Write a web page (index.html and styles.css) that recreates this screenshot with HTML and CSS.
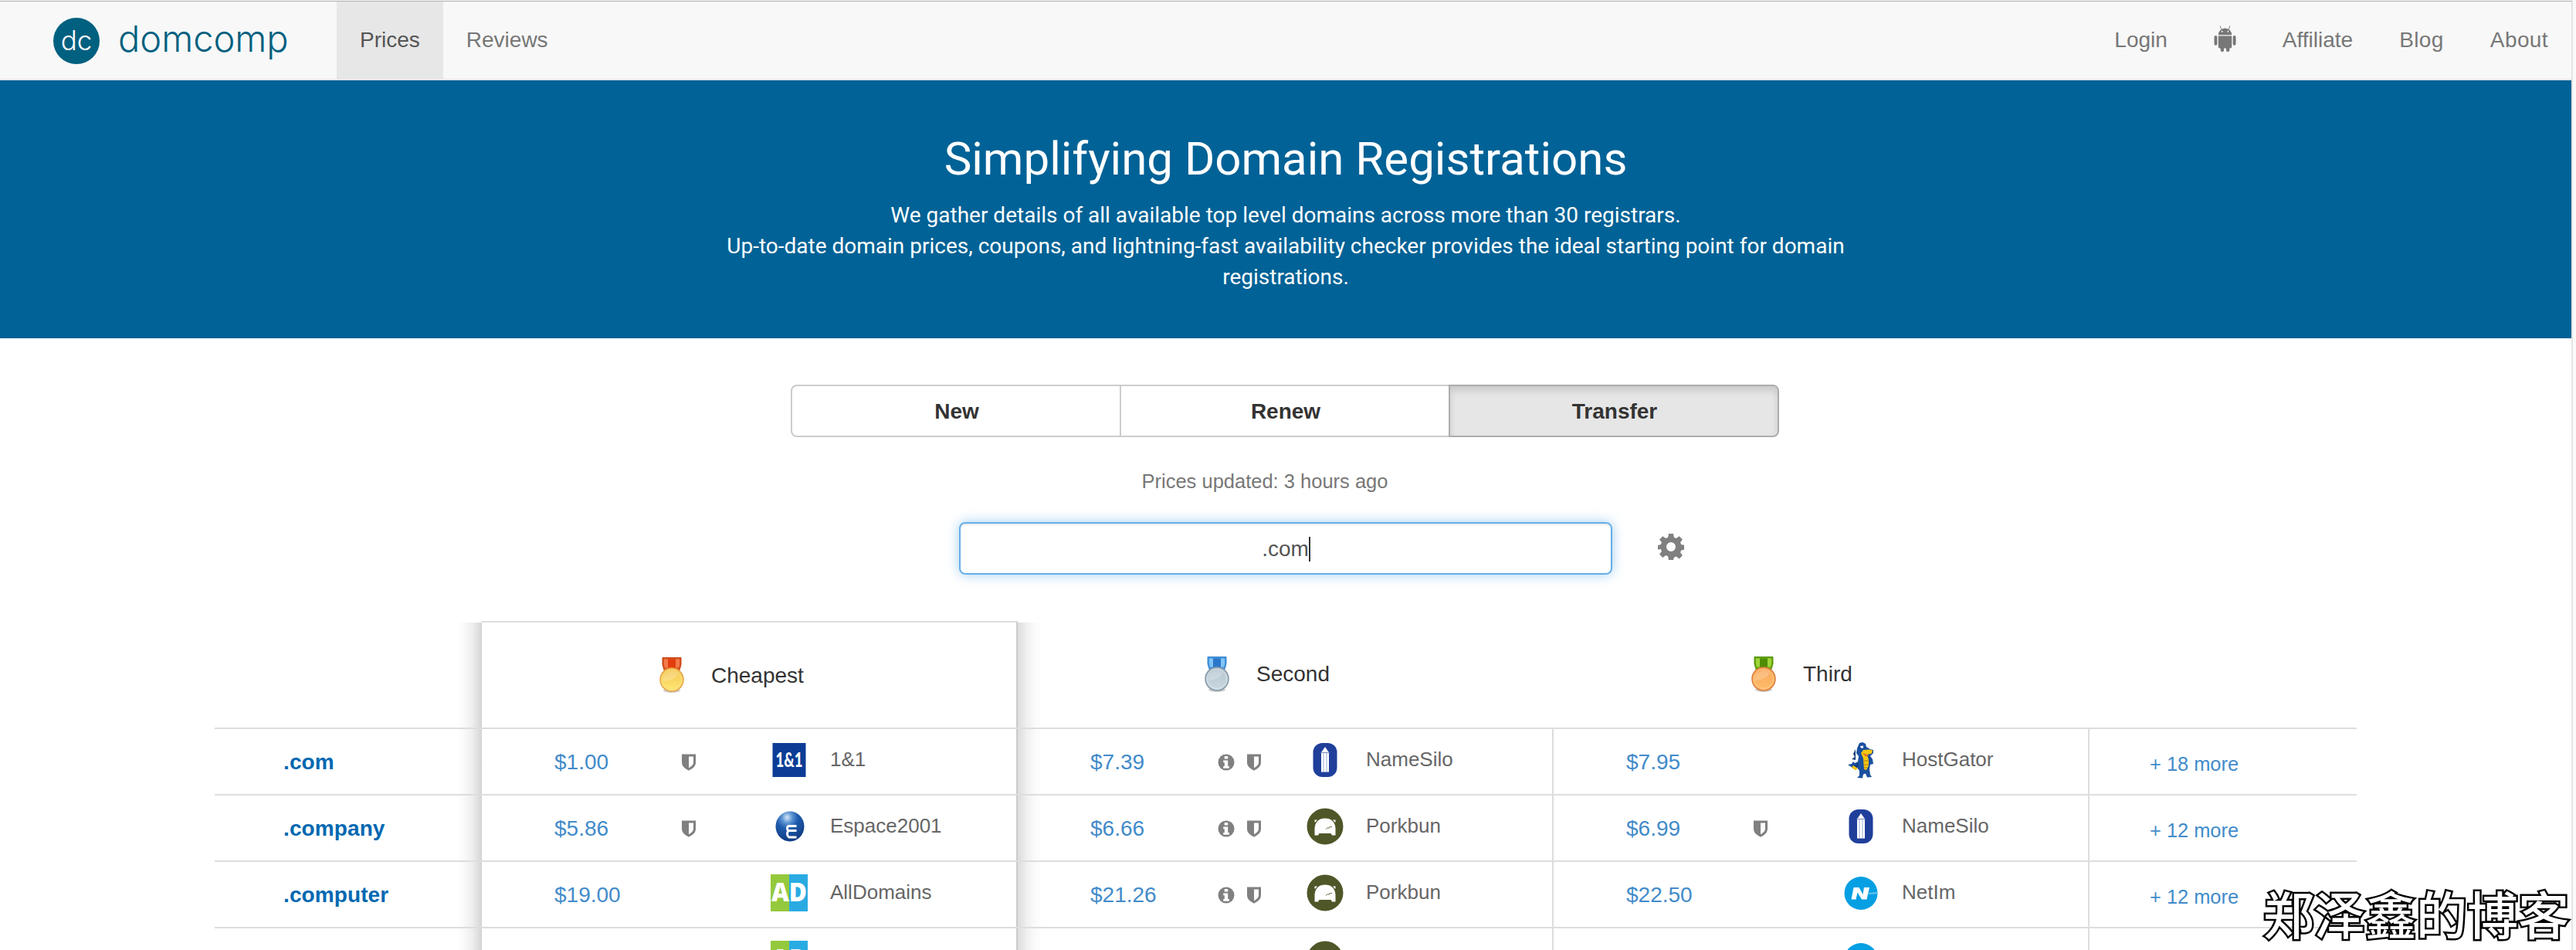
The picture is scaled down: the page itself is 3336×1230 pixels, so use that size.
FILE: index.html
```
<!DOCTYPE html>
<html lang="en">
<head>
<meta charset="utf-8">
<title>domcomp</title>
<link rel="stylesheet" href="styles.css">
</head>
<body>
<svg class="defs" width="0" height="0" aria-hidden="true">
  <defs>
    <linearGradient id="gold" x1="0" y1="0" x2="0" y2="1"><stop offset="0" stop-color="#f3c454"/><stop offset="1" stop-color="#ffe873"/></linearGradient>
    <linearGradient id="silver" x1="0" y1="0" x2="0" y2="1"><stop offset="0" stop-color="#b5c4ce"/><stop offset="1" stop-color="#c9d9df"/></linearGradient>
    <linearGradient id="bronze" x1="0" y1="0" x2="0" y2="1"><stop offset="0" stop-color="#f9a75c"/><stop offset="1" stop-color="#ffbd69"/></linearGradient>
    <radialGradient id="ball" cx=".4" cy=".2" r=".75"><stop offset="0" stop-color="#d5e8fa"/><stop offset=".25" stop-color="#5b93d2"/><stop offset=".5" stop-color="#1f5cae"/><stop offset="1" stop-color="#123f86"/></radialGradient>
  </defs>
  <symbol id="shield" viewBox="0 0 18 22"><path fill="#808080" fill-rule="evenodd" d="M0 0.5h18v10.500c0 5.500-4.500 8.500-9 10.700c-4.500-2.200-9-5.200-9-10.700zM9 3.500v14.700c3.500-2 6-4.200 6-7.300v-7.400z"/></symbol>
  <symbol id="info" viewBox="0 0 22 22"><circle cx="11" cy="11" r="10.500" fill="#808080"/><path fill="#fff" d="M8.700 3h4.500v3.600h-4.500zM7.200 8.500h6v7.500h1.700v2.700h-7.700v-2.700h1.600v-4.700h-1.600z"/></symbol>
  <symbol id="espace" viewBox="0 0 48 48"><ellipse cx="25" cy="24" rx="18.500" ry="19.500" fill="url(#ball)"/><path d="M33.500 23H24q-2.500 0-2.500 3t2.500 3h9.500M24 29q-2.500 1-2.500 4t2.500 4.500h9.500" transform="translate(0 0.500)" fill="none" stroke="#fff" stroke-width="2.800"/></symbol>
  <symbol id="namesilo" viewBox="0 0 48 48"><rect x="8.500" y="2" width="31" height="44" rx="12" fill="#1f3f9b"/><path fill="#fff" d="M24 7l4.800 7h-9.600zM19 15h10v24.500h-10z"/><path fill="none" stroke="#9daad0" stroke-width="1" d="M22 15v24.500M26 15v24.500M18.500 14.300h11"/></symbol>
  <symbol id="porkbun" viewBox="0 0 48 48"><circle cx="24" cy="24" r="23.500" fill="#4f5728"/><path fill="#fff" d="M10.500 15.500h3.500l-2.500 3h-1zM37.500 15.500h-3.500l2.500 3h1zM10.500 35.500V26Q12 13.500 24 13.500T37.500 26V35.500H33L31.500 33H16.500L15 35.500z"/><path fill="none" stroke="#4f5728" stroke-width=".8" d="M25 27.500l3.500-2.500M28.500 27l1.500-2.500h3"/></symbol>
  <symbol id="hostgator" viewBox="0 0 48 48">
    <path fill="#1b50a0" d="M22 2l4-1 4 2 1 4 5 3 4 1v4l-4 4 3 4 1 6-4 1-1 6 1 7 2 3-6 .5-2-5-3 1-1 5-7-.5 3-3v-6l-3-4-3 2-9-6 5-1 2-3 2 2 4-2 1-7-3-4 1-6z"/>
    <path fill="#173c7c" d="M17 10l-3 6 2 4-4 3 5 1M12 33l5 4 3-4 1-5z"/>
    <path fill="#f5c60d" d="M27 11l8-.500 4 1-1 4-6 1.500 2 7v7l-3 6-3-1-1-14-3-7zM12 34l5 3 3-2-6-4z"/>
    <path fill="#e16b2d" d="M26 15l9 3-5 1.500z"/><path fill="#fff" d="M23 6l4-.5v3h-3z"/><path stroke="#b07b15" fill="none" d="M28 25h6M28 30h6M28 34h4"/>
  </symbol>
  <symbol id="netim" viewBox="0 0 48 48"><circle cx="24" cy="24.500" r="21.500" fill="#059fe3"/><path fill="#6cc7ef" d="M34 24l12-1v2l-12 1z"/><path fill="#fff" d="M14.500 17h7l5 9 1.500-9h7l-3.500 15.500h-6.500l-5.500-9-2 9h-6z"/></symbol>
</svg>

<div class="page">
  <header class="nav">
    <a class="brand">
      <span class="badge">dc</span>
      <span class="word">domcomp</span>
    </a>
    <nav class="links">
      <a class="link active">Prices</a>
      <a class="link">Reviews</a>
    </nav>
    <nav class="links right">
      <a class="link">Login</a>
      <a class="link"><svg class="android" viewBox="0 0 30 36"><g fill="#777"><path d="M6 13.500a9 9 0 0 1 18 0z"/><path d="M10 6L8.500 1.500M20 6l1.500-4.500" stroke="#777" stroke-width="1"/><path d="M6 15h18v14.500a2 2 0 0 1-2 2H8a2 2 0 0 1-2-2z"/><rect x="0.500" y="14.500" width="4" height="13" rx="2"/><rect x="25.500" y="14.500" width="4" height="13" rx="2"/><rect x="9" y="25" width="4.500" height="11" rx="2"/><rect x="16.500" y="25" width="4.500" height="11" rx="2"/></g><circle cx="11" cy="9" r="1" fill="#f8f8f8"/><circle cx="19" cy="9" r="1" fill="#f8f8f8"/></svg></a>
      <a class="link">Affiliate</a>
      <a class="link loose">Blog</a>
      <a class="link loose">About</a>
    </nav>
  </header>

  <section class="hero">
    <h1>Simplifying Domain Registrations</h1>
    <p>We gather details of all available top level domains across more than 30 registrars.<br>Up-to-date domain prices, coupons, and lightning-fast availability checker provides the ideal starting point for domain<br>registrations.</p>
  </section>

  <div class="tabs">
    <button class="tab">New</button>
    <button class="tab">Renew</button>
    <button class="tab on">Transfer</button>
  </div>
  <p class="updated">Prices updated: 3 hours ago</p>
  <div class="search">
    <div class="field">.com<span class="caret"></span></div>
    <svg class="gear" viewBox="0 0 34 34"><path fill="#808080" fill-rule="evenodd" d="M14 0h6l.9 4.700 2.800 1.200 4-2.700 4.200 4.200-2.800 3.900 1.100 2.800 4.800.9v5.500l-4.800.9-1.100 2.800 2.800 4-4.200 4.200-4-2.800-2.800 1.200L20 34h-6l-.9-4.700-2.800-1.200-4 2.800-4.200-4.200 2.800-4-1.100-2.800L0 20.500V15l3.800-.9 1.100-2.800-2.800-3.900L6.300 3.200l4 2.700 2.800-1.200zM17 11a6 6 0 1 0 0 12a6 6 0 0 0 0-12z"/></svg>
  </div>

  <div class="table">
    <div class="row head">
      <div class="cell tld"></div>
      <div class="cell best title"><svg class="medal" viewBox="0 0 34 50"><ellipse cx="17" cy="45" rx="11" ry="3" fill="#0003"/><path fill="#d9531e" stroke="#c2410f" d="M5 2.500h24v9l-2 7H7l-2-7z"/><path fill="#f37b4b" d="M7 4.500h5v11H8l-1-4zM22 4.500h5v7l-1 4h-4z"/><path fill="#e23d0c" d="M12 4.500h10v12H12z"/><circle cx="17" cy="31" r="15" fill="url(#gold)" stroke="#e8a548" stroke-width="1.500"/><circle cx="17" cy="31" r="12.500" fill="none" stroke="#fbe08c"/><path fill="#fff" opacity=".2" d="M6 33a11.500 11.500 0 0 1 19-10q-4 9-19 10z"/></svg><span>Cheapest</span></div>
      <div class="cell second title"><svg class="medal" viewBox="0 0 34 50"><ellipse cx="17" cy="45" rx="11" ry="3" fill="#0003"/><path fill="#4294dc" stroke="#3a86cb" d="M5 2.500h24v9l-2 7H7l-2-7z"/><path fill="#80c4f6" d="M7 4.500h5v11H8l-1-4zM22 4.500h5v7l-1 4h-4z"/><path fill="#2a77ca" d="M12 4.500h10v12H12z"/><circle cx="17" cy="31" r="15" fill="url(#silver)" stroke="#8798a8" stroke-width="1.500"/><circle cx="17" cy="31" r="12.500" fill="none" stroke="#d9e5ea"/><path fill="#fff" opacity=".2" d="M6 33a11.500 11.500 0 0 1 19-10q-4 9-19 10z"/></svg><span>Second</span></div>
      <div class="cell third title"><svg class="medal" viewBox="0 0 34 50"><ellipse cx="17" cy="45" rx="11" ry="3" fill="#0003"/><path fill="#66a60e" stroke="#55900a" d="M5 2.500h24v9l-2 7H7l-2-7z"/><path fill="#a0d53c" d="M7 4.500h5v11H8l-1-4zM22 4.500h5v7l-1 4h-4z"/><path fill="#4f8d04" d="M12 4.500h10v12H12z"/><circle cx="17" cy="31" r="15" fill="url(#bronze)" stroke="#d87d3b" stroke-width="1.500"/><circle cx="17" cy="31" r="12.500" fill="none" stroke="#ffcb8c"/><path fill="#fff" opacity=".2" d="M6 33a11.500 11.500 0 0 1 19-10q-4 9-19 10z"/></svg><span>Third</span></div>
      <div class="cell more"></div>
    </div>
    <div class="row">
      <div class="cell tld">.com</div>
      <div class="cell best"><b class="price">$1.00</b><span class="marks"><svg class="sh"><use href="#shield"/></svg></span><svg class="logo" viewBox="0 0 48 48"><rect x="2.500" y="2" width="43" height="44" fill="#0c3d96"/><text class="logo-one" x="24" y="33" text-anchor="middle" textLength="35" lengthAdjust="spacingAndGlyphs">1&amp;1</text></svg><span class="name">1&amp;1</span></div>
      <div class="cell second"><b class="price">$7.39</b><span class="marks"><svg class="in"><use href="#info"/></svg><svg class="sh"><use href="#shield"/></svg></span><svg class="logo"><use href="#namesilo"/></svg><span class="name">NameSilo</span></div>
      <div class="cell third"><b class="price">$7.95</b><span class="marks"></span><svg class="logo"><use href="#hostgator"/></svg><span class="name">HostGator</span></div>
      <div class="cell more">+ 18 more</div>
    </div>
    <div class="row">
      <div class="cell tld">.company</div>
      <div class="cell best"><b class="price">$5.86</b><span class="marks"><svg class="sh"><use href="#shield"/></svg></span><svg class="logo"><use href="#espace"/></svg><span class="name">Espace2001</span></div>
      <div class="cell second"><b class="price">$6.66</b><span class="marks"><svg class="in"><use href="#info"/></svg><svg class="sh"><use href="#shield"/></svg></span><svg class="logo"><use href="#porkbun"/></svg><span class="name">Porkbun</span></div>
      <div class="cell third"><b class="price">$6.99</b><span class="marks"><svg class="sh"><use href="#shield"/></svg></span><svg class="logo"><use href="#namesilo"/></svg><span class="name">NameSilo</span></div>
      <div class="cell more">+ 12 more</div>
    </div>
    <div class="row">
      <div class="cell tld">.computer</div>
      <div class="cell best"><b class="price">$19.00</b><span class="marks"></span><svg class="logo" viewBox="0 0 48 48"><rect width="24" height="48" fill="#95c93d"/><rect x="24" width="24" height="48" fill="#29abe2"/><text class="logo-ad" x="24" y="35" text-anchor="middle" textLength="46" lengthAdjust="spacingAndGlyphs">AD</text></svg><span class="name">AllDomains</span></div>
      <div class="cell second"><b class="price">$21.26</b><span class="marks"><svg class="in"><use href="#info"/></svg><svg class="sh"><use href="#shield"/></svg></span><svg class="logo"><use href="#porkbun"/></svg><span class="name">Porkbun</span></div>
      <div class="cell third"><b class="price">$22.50</b><span class="marks"></span><svg class="logo"><use href="#netim"/></svg><span class="name">NetIm</span></div>
      <div class="cell more">+ 12 more</div>
    </div>
    <div class="row">
      <div class="cell tld"></div>
      <div class="cell best"><b class="price"></b><span class="marks"></span><svg class="logo" viewBox="0 0 48 48"><rect width="24" height="48" fill="#95c93d"/><rect x="24" width="24" height="48" fill="#29abe2"/><text class="logo-ad" x="24" y="35" text-anchor="middle" textLength="46" lengthAdjust="spacingAndGlyphs">AD</text></svg></div>
      <div class="cell second"><b class="price"></b><span class="marks"></span><svg class="logo"><use href="#porkbun"/></svg></div>
      <div class="cell third"><b class="price"></b><span class="marks"></span><svg class="logo"><use href="#netim"/></svg></div>
      <div class="cell more"></div>
    </div>
  </div>
</div>
<div class="watermark">郑泽鑫的博客</div>
</body>
</html>
```
FILE: styles.css
```
* { box-sizing: border-box; }
html { height: 1230px; overflow: hidden; background: #fafafa; }
body {
  position: relative;
  margin: 0;
  height: 1230px;
  overflow: hidden;
  font-family: "Liberation Sans", Arial, sans-serif;
  font-size: 28px;
  color: #333;
  background: #fafafa;
  border-top: 1px solid #fafafa;
}
.defs { display: block; height: 0; }
.page {
  width: 3332px;
  height: 1229px;
  overflow: hidden;
  background: #fff;
  border-top: 1px solid #abaeab;
  border-right: 2px solid #e4e4e4;
}

.nav {
  display: flex;
  height: 102px;
  background: #f8f8f8;
  border-bottom: 2px solid #e7e7e7;
}
.brand {
  display: flex;
  width: 436px;
  padding: 21px 0 0 69px;
  color: #00607f;
}
.badge {
  width: 60px;
  height: 60px;
  border-radius: 50%;
  background: #00607f;
  color: #fff;
  font: 300 35px/58px Inter, sans-serif;
  text-align: center;
}
.word {
  margin: -3px 0 0 24px;
  font: 300 47px/60px Inter, sans-serif;
}
.links { display: flex; }
.right { margin-left: auto; }
.link {
  display: flex;
  padding: 0 30px;
  line-height: 100px;
  color: #777;
}
.loose { letter-spacing: .4px; }
.active { background: #e7e7e7; color: #555; }
.android { width: 29px; height: 35px; margin-top: 30px; }

.hero {
  height: 334px;
  padding-top: 64px;
  background: #006296;
  color: #fff;
  text-align: center;
  font-family: Roboto, sans-serif;
}
.hero h1 { margin: 0; font-size: 60px; line-height: 76px; font-weight: 400; }
.hero p { margin: 15px 0 0; line-height: 40px; font-size: 28px; }

.tabs { display: flex; width: 1280px; margin: 60px auto 0 1024px; }
.tab {
  flex: 1;
  height: 68px;
  padding: 1px 0 0 2px;
  margin-left: -2px;
  border: 2px solid #ccc;
  background: #fff;
  color: #333;
  font: bold 28px "Liberation Sans", Arial, sans-serif;
}
.tab:first-child { flex-basis: 2px; margin-left: 0; border-radius: 8px 0 0 8px; }
.tab:last-child { border-radius: 0 8px 8px 0; }
.on {
  background: #e6e6e6;
  border-color: #adadad;
  box-shadow: inset 0 6px 10px rgba(0, 0, 0, .125);
}
.updated {
  margin: 42px 0 0;
  padding-right: 54px;
  line-height: 30px;
  font-size: 25.500px;
  color: #777;
  text-align: center;
}
.search { display: flex; margin: 38px 0 0 1242px; }
.field {
  display: flex;
  align-items: center;
  justify-content: center;
  width: 846px;
  height: 68px;
  padding-top: 1px;
  border: 2px solid #66afe9;
  border-radius: 8px;
  color: #555;
  box-shadow: inset 0 2px 2px rgba(0, 0, 0, .075), 0 0 16px rgba(102, 175, 233, .6);
}
.caret { width: 2px; height: 32px; margin-right: -1px; background: #333; }
.gear { width: 34px; height: 34px; margin: 15px 0 0 59px; }

.table { width: 2774px; margin: 60px 0 0 278px; }
.row {
  display: grid;
  grid-template-columns: 346px 694px 694px 694px 346px;
  height: 86px;
  border-top: 2px solid #ddd;
}
.head { height: 138px; border-top: 0; }
.cell { display: flex; align-items: center; }
.tld {
  padding: 2px 0 0 89px;
  font-weight: bold;
  letter-spacing: .1px;
  color: #0068b1;
  background: linear-gradient(to left, #d4d4d4, #eee 12px, #fafafa 24px, #fff 32px) right / 32px 100% no-repeat;
}
.best { border-right: 2px solid #ccc; }
.second { background: linear-gradient(to right, #dcdcdc, #f0f0f0 12px, #fafafa 22px, #fff 32px) left / 32px 100% no-repeat; }
.row:not(.head) .second, .row:not(.head) .third { border-right: 2px solid #ddd; }
.head .best { border-top: 2px solid #ddd; }
.head .tld, .head .second { background-position-y: 2px; }
.medal { width: 34px; height: 50px; margin-right: 34px; }
.title { padding-left: 229px; }
.title.third { padding-left: 255px; }
.title.second { padding-left: 241px; }
.title.second, .title.third { padding-bottom: 1px; }
.title span { padding-top: 1px; }
.price { width: 259px; padding: 2px 0 0 94px; font-weight: 400; color: #428bca; }
.marks { display: flex; width: 115px; padding-top: 2px; gap: 16px; }
.sh { width: 18px; height: 22px; }
.in { width: 22px; height: 22px; }
.logo { width: 48px; height: 48px; margin-bottom: 4px; }
.logo-one { font: 900 27px Lato, sans-serif; fill: #fff; }
.logo-ad { font: 800 33px "Open Sans", sans-serif; fill: #fff; }
.name { margin: 0 0 5px 29px; font-size: 26px; color: #666; }
.more { padding: 7px 0 0 78px; font-size: 25.400px; color: #428bca; }

.watermark {
  position: absolute;
  left: 2931px;
  top: 1132px;
  font: 500 66px/96px "Noto Sans CJK SC", sans-serif;
  color: #fff;
  white-space: nowrap;
  -webkit-text-stroke: 5px #000;
  paint-order: stroke fill;
}
```
